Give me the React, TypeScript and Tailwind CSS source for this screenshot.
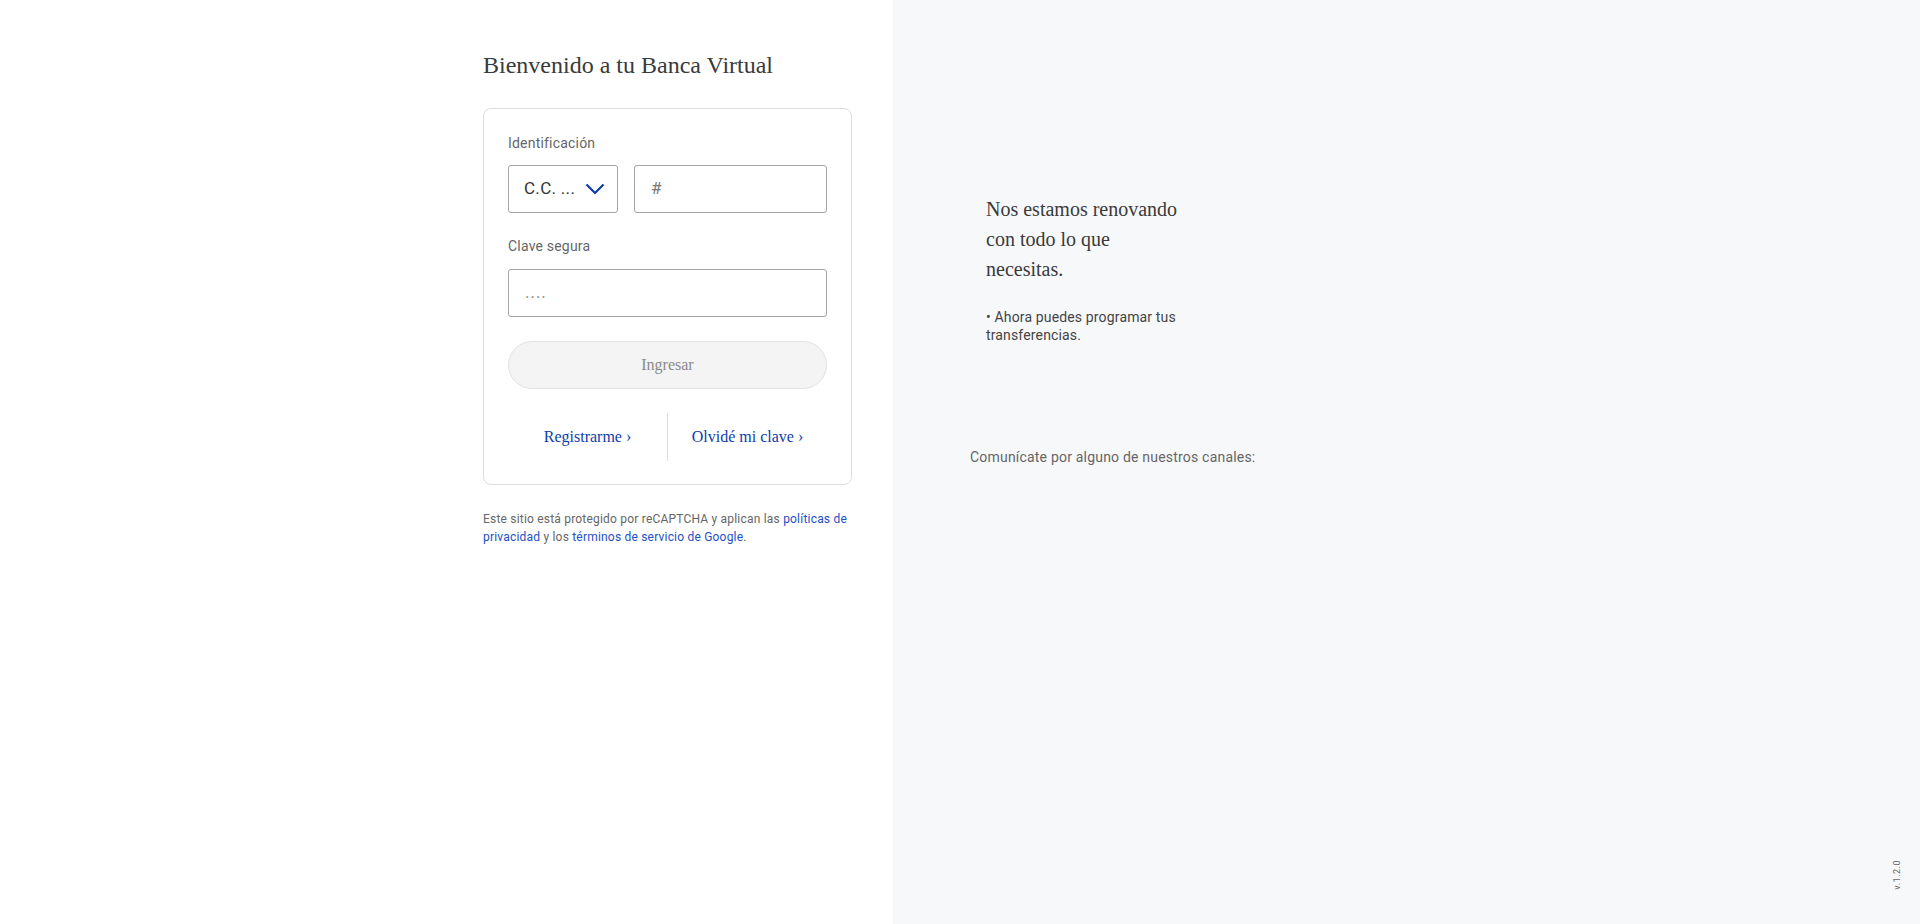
import React from "react";

const serif = { fontFamily: '"Liberation Serif", "Times New Roman", serif' };

export default function App() {
  return (
    <div className="flex min-h-[924px] w-full font-['Roboto',sans-serif]">
      {/* Left panel */}
      <div className="flex w-[893px] shrink-0 justify-end bg-white pr-[41px] pt-[51px]">
        <div className="flex w-[369px] flex-col">
          <h1 className="text-[24px] leading-[28px] text-[#3a3a3a]" style={serif}>
            Bienvenido a tu Banca Virtual
          </h1>
          <div className="mt-[29px] rounded-[8px] border border-[#dedede] bg-white px-6 pb-[23px] pt-6">
            <div className="text-[14px] leading-[20px] tracking-[0.2px] text-[#666]">Identificación</div>
            <div className="mt-3 flex gap-4">
              <div className="flex h-[48px] w-[110px] items-center justify-between rounded-[3px] border border-[#a5a5a5] pl-[15px] pr-[12px]">
                <span className="text-[17px] tracking-[0.3px] text-[#333]">C.C. ...</span>
                <svg width="20" height="12" viewBox="0 0 20 12" fill="none">
                  <path d="M1.5 1.5 L10 10 L18.5 1.5" stroke="#0b3fa6" strokeWidth="2.2" />
                </svg>
              </div>
              <div className="flex h-[48px] flex-1 items-center rounded-[3px] border border-[#a5a5a5] pl-[16px]">
                <span className="text-[17px] text-[#777]">#</span>
              </div>
            </div>
            <div className="mt-[23px] text-[14px] leading-[20px] tracking-[0.2px] text-[#666]">Clave segura</div>
            <div className="mt-[13px] flex h-[48px] items-center rounded-[3px] border border-[#a5a5a5] pl-[16px]">
              <span className="text-[17px] tracking-[1.2px] text-[#999]" style={serif}>....</span>
            </div>
            <button
              className="mt-6 flex h-[48px] w-full items-center justify-center rounded-full border border-[#e2e2e2] bg-[#f4f4f4] text-[16px] text-[#8a8a8a]"
              style={serif}
            >
              Ingresar
            </button>
            <div className="mt-6 flex h-[48px] items-center">
              <a className="flex flex-1 justify-center text-[16px] text-[#0f3ea8]" style={serif}>
                Registrarme ›
              </a>
              <div className="h-full w-px bg-[#dcdcdc]" />
              <a className="flex flex-1 justify-center text-[16px] text-[#0f3ea8]" style={serif}>
                Olvidé mi clave ›
              </a>
            </div>
          </div>
          <p className="mt-[25px] text-[12px] leading-[18px] tracking-[0.2px] text-[#666]">
            Este sitio está protegido por reCAPTCHA y aplican las{" "}
            <a className="text-[#1d4fc4]">políticas de privacidad</a> y los{" "}
            <a className="text-[#1d4fc4]">términos de servicio de Google</a>.
          </p>
        </div>
      </div>
      {/* Right panel */}
      <div className="flex flex-1 flex-col bg-[#f7f8fa] pl-[77px] pt-[194px] pr-[18px] pb-[34px]">
        <div className="w-[210px] pl-4">
          <h2 className="text-[20px] leading-[30px] text-[#3a3a3a]" style={serif}>
            Nos estamos renovando con todo lo que necesitas.
          </h2>
          <p className="mt-6 text-[14px] leading-[18px] tracking-[0.15px] text-[#444]">
            • Ahora puedes programar tus transferencias.
          </p>
        </div>
        <p className="mt-[103px] text-[14px] leading-[20px] tracking-[0.2px] text-[#666]">
          Comunícate por alguno de nuestros canales:
        </p>
        <div className="mt-auto self-end text-[9px] leading-[10px] tracking-[0.5px] text-[#666] [writing-mode:vertical-rl] rotate-180">
          v.1.2.0
        </div>
      </div>
    </div>
  );
}
